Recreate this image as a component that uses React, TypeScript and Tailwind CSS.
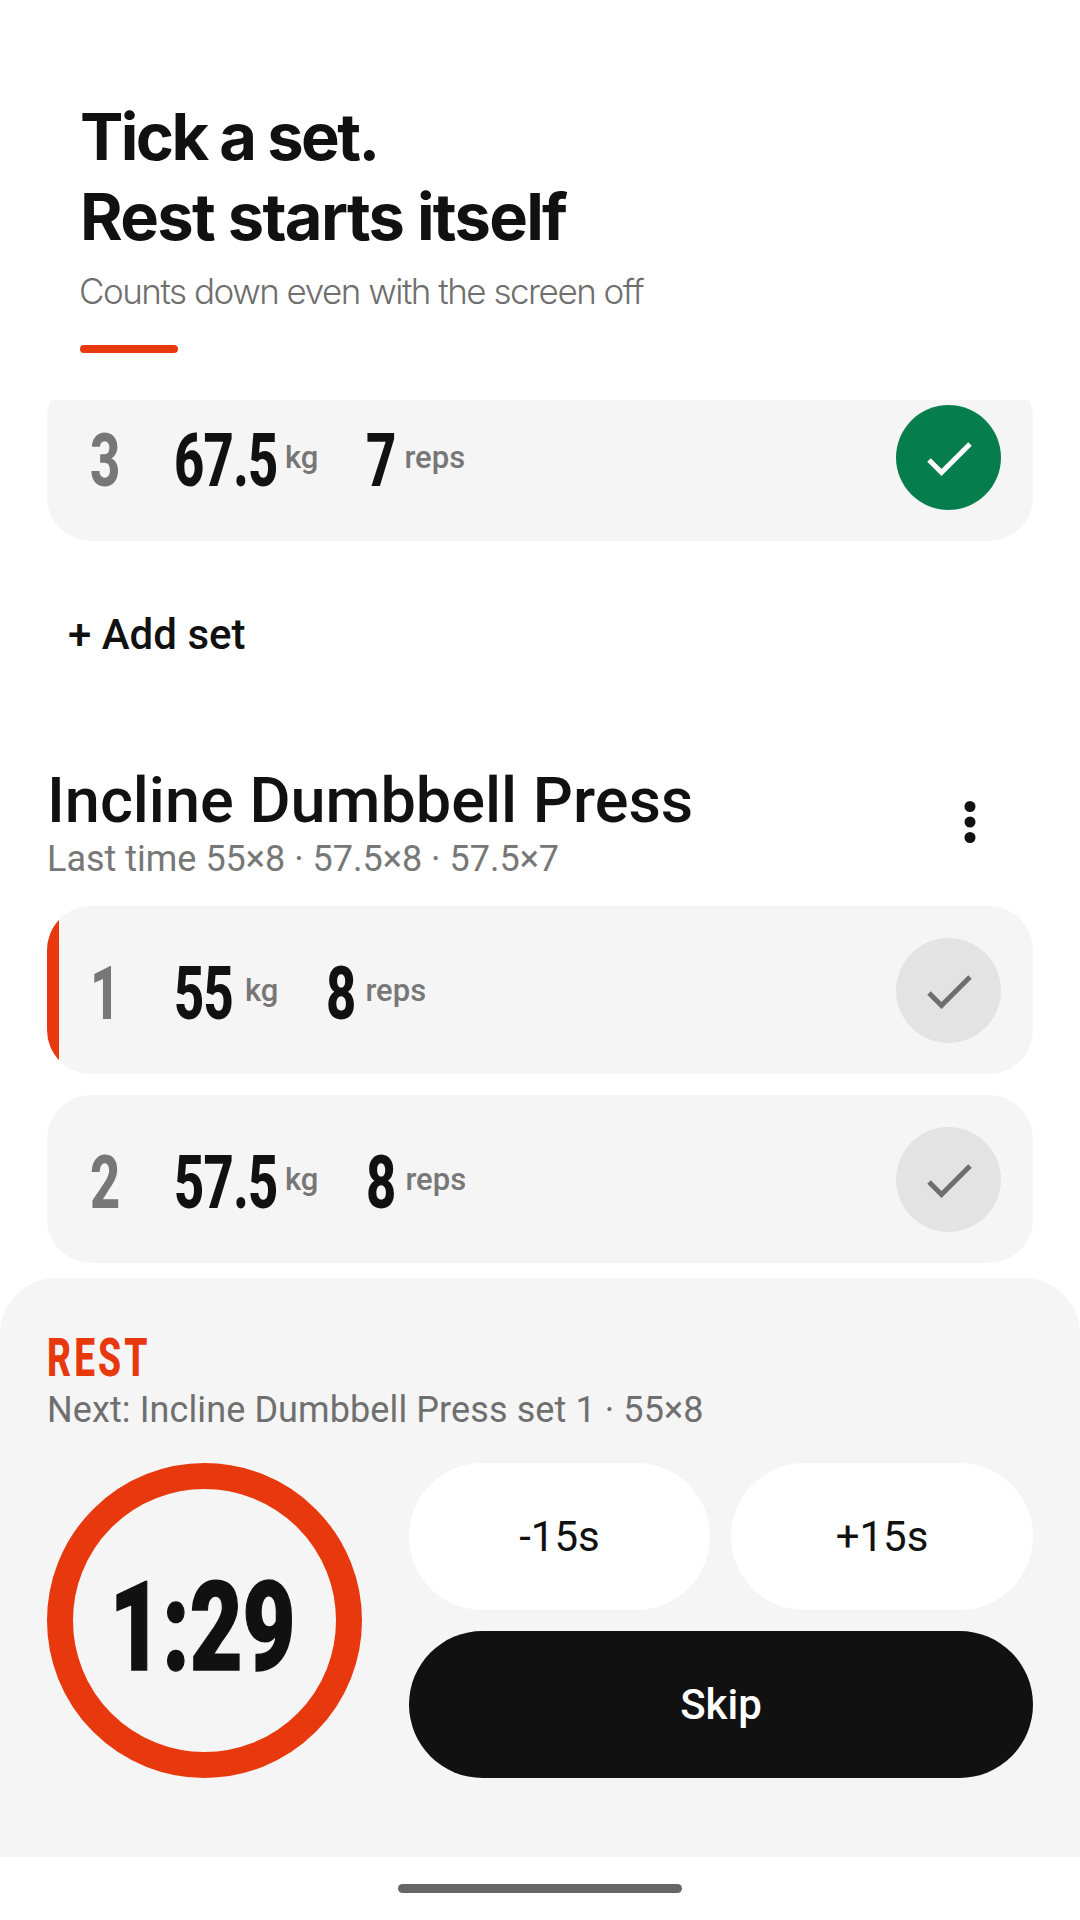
const RED = "bg-[#e8380d]";

function Check({ done }: { done?: boolean }) {
  return (
    <div className={`w-[105px] h-[105px] rounded-full flex items-center justify-center shrink-0 ${done ? "bg-[#067d4d]" : "bg-[#e3e3e3]"}`}>
      <svg width="48" height="48" viewBox="0 0 48 48" fill="none">
        <path d="M4 27 L16.5 39.5 L45 11" stroke={done ? "#ffffff" : "#6e6e6e"} strokeWidth="5" />
      </svg>
    </div>
  );
}

function Num({ children, color }: { children: string; color: string }) {
  return (
    <span className={`inline-block origin-left scale-x-[0.7] mt-[6px] font-['Roboto',sans-serif] font-extrabold text-[75px] leading-none tracking-[-1px] whitespace-nowrap ${color}`}>{children}</span>
  );
}

function Row({ n, w, r, done, active, wBox, rBox, rGap }: { n: string; w: string; r: string; done?: boolean; active?: boolean; wBox: string; rBox: string; rGap: string }) {
  return (
    <div className="relative h-[168px] shrink-0 rounded-[44px] bg-[#f5f5f5] overflow-hidden flex items-center pr-[32px]">
      {active && <div className={`absolute left-0 top-0 bottom-0 w-[12px] ${RED}`} />}
      <div className="w-[127px] pl-[43px] shrink-0"><Num color="text-[#777777]">{n}</Num></div>
      <div className={`${wBox} shrink-0`}><Num color="text-[#111111]">{w}</Num></div>
      <span className="text-[31px] font-medium leading-none text-[#777777] ml-[11px]">kg</span>
      <div className={`${rBox} ${rGap} shrink-0`}><Num color="text-[#111111]">{r}</Num></div>
      <span className="text-[31px] font-medium leading-none text-[#777777] ml-[11px]">reps</span>
      <div className="ml-auto"><Check done={done} /></div>
    </div>
  );
}

export default function App() {
  return (
    <div className="w-[1080px] h-[1920px] bg-white flex flex-col overflow-hidden font-['Roboto',sans-serif]">
      <div className="h-[400px] shrink-0 pl-[80px] pt-[97px]">
        <h1 className="font-['Inter',sans-serif] font-bold text-[65px] leading-[80px] text-[#111111]">
          <span className="block tracking-[-2.6px]">Tick a set.</span>
          <span className="block tracking-[-1.7px]">Rest starts itself</span>
        </h1>
        <p className="font-['Inter',sans-serif] font-light text-[35px] leading-[44px] mt-[12px] -ml-[1px] text-[#6f6f6f] tracking-[-1.5px]">Counts down even with the screen off</p>
        <div className={`mt-[32px] w-[98px] h-[8px] rounded-full ${RED}`} />
      </div>
      <div className="flex-1 min-h-0 overflow-hidden px-[47px] flex flex-col">
        <div className="-mt-[27px]"><Row n="3" w="67.5" r="7" done wBox="w-[100px]" rBox="w-[27px]" rGap="ml-[48px]" /></div>
        <div className="mt-[68px] pl-[21px] h-[50px] shrink-0 flex items-center text-[42px] font-medium text-[#111111]">+ Add set</div>
        <div className="mt-[108px] flex items-start justify-between shrink-0">
          <div>
            <div className="text-[63px] leading-[68px] font-medium text-[#111111]">Incline Dumbbell Press</div>
            <div className="text-[36px] leading-[40px] mt-[4px] text-[#777777]">Last time 55×8 · 57.5×8 · 57.5×7</div>
          </div>
          <svg className="mr-[55px] mt-[33px]" width="16" height="44" viewBox="0 0 16 44" fill="#111111"><circle cx="8" cy="6.5" r="5.5" /><circle cx="8" cy="22" r="5.5" /><circle cx="8" cy="37.5" r="5.5" /></svg>
        </div>
        <div className="mt-[27px] flex flex-col gap-[21px]">
          <Row n="1" w="55" r="8" active wBox="w-[60px]" rBox="w-[28px]" rGap="ml-[48px]" />
          <Row n="2" w="57.5" r="8" wBox="w-[100px]" rBox="w-[28px]" rGap="ml-[48px]" />
        </div>
      </div>
      <div className="h-[579px] shrink-0 bg-[#f5f5f5] rounded-t-[56px] px-[47px] pt-[56px]">
        <div className="origin-left scale-x-[0.7] font-extrabold text-[53px] leading-[48px] tracking-[4.5px] text-[#e8380d]">REST</div>
        <div className="text-[36px] leading-[40px] mt-[8px] tracking-[0.1px] text-[#6f6f6f]">Next: Incline Dumbbell Press set 1 · 55×8</div>
        <div className="mt-[33px] flex gap-[47px]">
          <div className="relative w-[315px] h-[315px] shrink-0 flex items-center justify-center">
            <svg className="absolute inset-0" width="315" height="315" viewBox="0 0 315 315"><circle cx="157.5" cy="157.5" r="144.5" fill="none" stroke="#e8380d" strokeWidth="26" /></svg>
            <span className="scale-x-[0.73] mt-[14px] mr-[4px] font-black text-[125px] leading-none text-[#111111] [-webkit-text-stroke:1.5px_#111111]">1:29</span>
          </div>
          <div className="flex-1 flex flex-col gap-[21px]">
            <div className="flex gap-[21px]">
              <div className="w-[301px] h-[147px] rounded-full bg-white flex items-center justify-center text-[42px] text-[#111111]">-15s</div>
              <div className="flex-1 h-[147px] rounded-full bg-white flex items-center justify-center text-[42px] text-[#111111]">+15s</div>
            </div>
            <div className="h-[147px] rounded-full bg-[#111111] flex items-center justify-center text-[42px] font-medium text-white">Skip</div>
          </div>
        </div>
      </div>
      <div className="h-[63px] shrink-0 bg-white flex items-start justify-center pt-[27px]">
        <div className="w-[284px] h-[9px] rounded-full bg-[#666666]" />
      </div>
    </div>
  );
}
